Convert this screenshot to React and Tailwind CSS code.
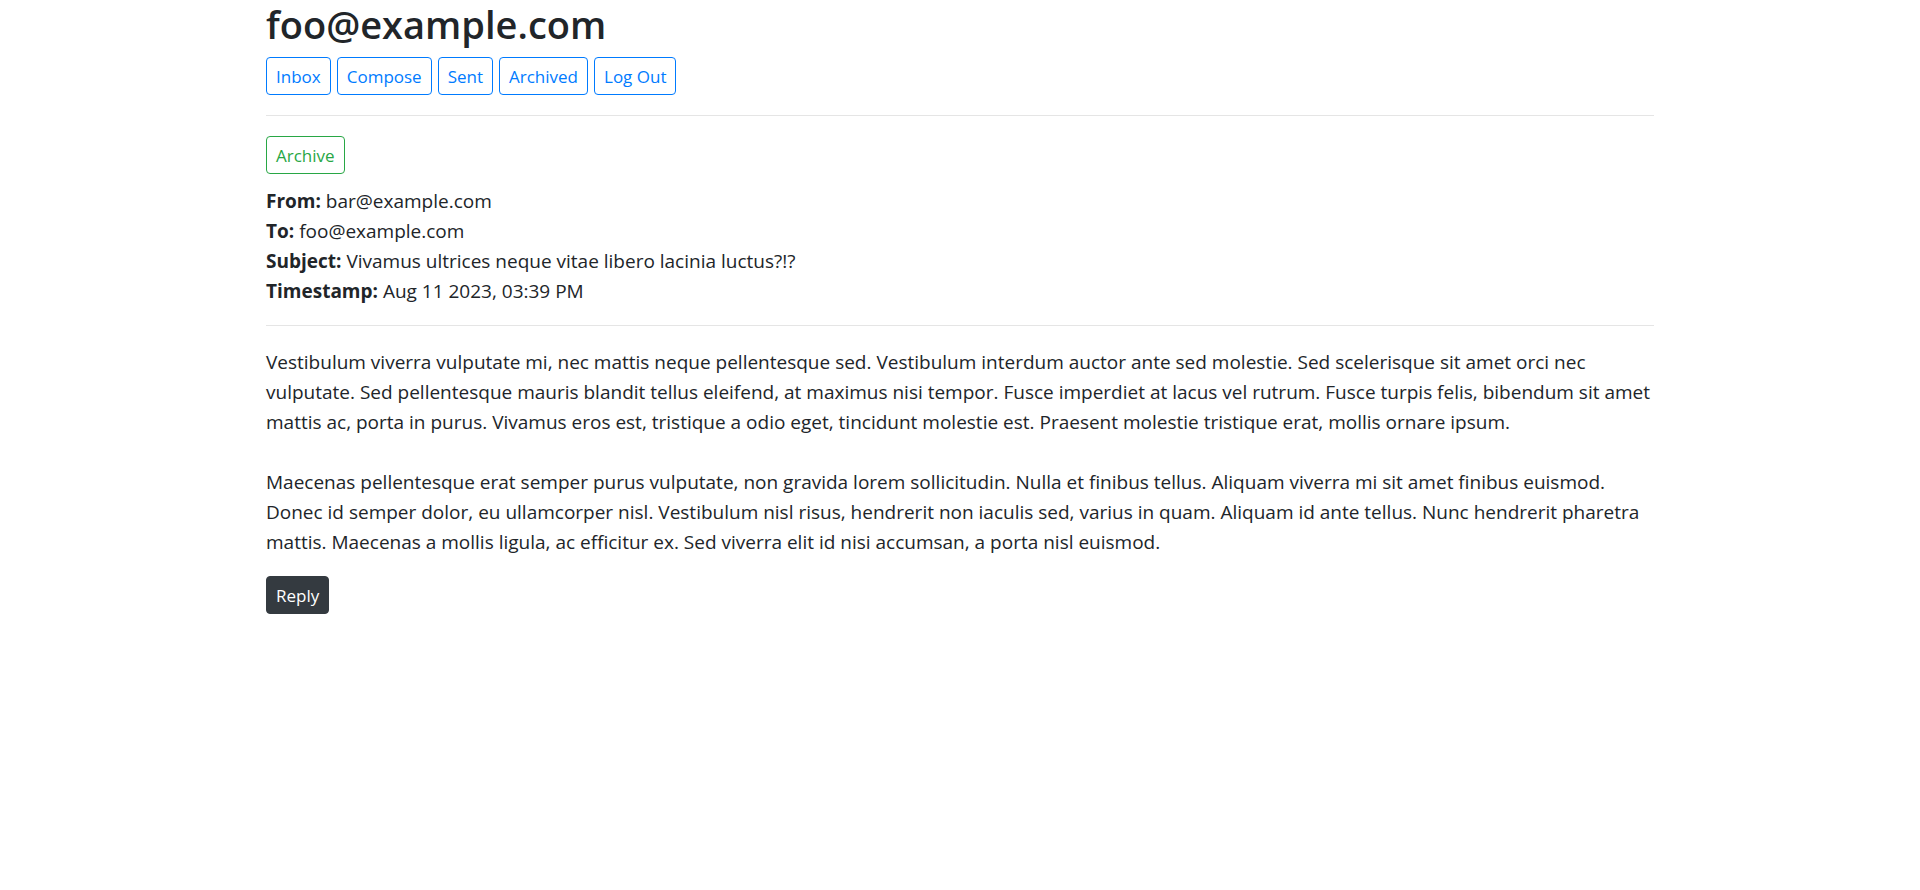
const navItems = ['Inbox', 'Compose', 'Sent', 'Archived', 'Log Out'];

const details = [
  ['From:', 'bar@example.com'],
  ['To:', 'foo@example.com'],
  ['Subject:', 'Vivamus ultrices neque vitae libero lacinia luctus?!?'],
  ['Timestamp:', 'Aug 11 2023, 03:39 PM'],
];

const paragraphs = [
  'Vestibulum viverra vulputate mi, nec mattis neque pellentesque sed. Vestibulum interdum auctor ante sed molestie. Sed scelerisque sit amet orci nec vulputate. Sed pellentesque mauris blandit tellus eleifend, at maximus nisi tempor. Fusce imperdiet at lacus vel rutrum. Fusce turpis felis, bibendum sit amet mattis ac, porta in purus. Vivamus eros est, tristique a odio eget, tincidunt molestie est. Praesent molestie tristique erat, mollis ornare ipsum.',
  'Maecenas pellentesque erat semper purus vulputate, non gravida lorem sollicitudin. Nulla et finibus tellus. Aliquam viverra mi sit amet finibus euismod. Donec id semper dolor, eu ullamcorper nisl. Vestibulum nisl risus, hendrerit non iaculis sed, varius in quam. Aliquam id ante tellus. Nunc hendrerit pharetra mattis. Maecenas a mollis ligula, ac efficitur ex. Sed viverra elit id nisi accumsan, a porta nisl euismod.',
];

const variants = {
  primary: 'border-[#007bff] text-[#007bff] hover:bg-[#007bff] hover:text-white',
  success: 'border-[#28a745] text-[#28a745] hover:bg-[#28a745] hover:text-white',
  dark: 'border-[#343a40] bg-[#343a40] text-white hover:bg-[#23272b]',
};

function Button({ variant, children }) {
  return (
    <button
      type="button"
      className={`cursor-pointer rounded-[4px] border px-[9px] pt-[6px] pb-1 text-[17px] leading-[26px] ${variants[variant]}`}
    >
      {children}
    </button>
  );
}

export default function App() {
  return (
    <div className="mx-auto max-w-[1424px] px-[18px] font-['Segoe_UI','Open_Sans',sans-serif] text-[19px] leading-[30px] text-[#212529]">
      <header className="border-b border-black/10 pb-5">
        <h2 className="mb-[9px] text-[38px] leading-[48px] font-semibold">foo@example.com</h2>
        <nav className="flex flex-wrap gap-[6px]">
          {navItems.map((item) => (
            <Button key={item} variant="primary">
              {item}
            </Button>
          ))}
        </nav>
      </header>

      <main className="pt-5">
        <section className="border-b border-black/10 pb-[19px]">
          <Button variant="success">Archive</Button>
          <div className="mt-3">
            {details.map(([label, value]) => (
              <p key={label}>
                <strong className="font-bold">{label}</strong> {value}
              </p>
            ))}
          </div>
        </section>

        <article className="space-y-[30px] pt-[21px] pb-[19px]">
          {paragraphs.map((text) => (
            <p key={text}>{text}</p>
          ))}
        </article>

        <Button variant="dark">Reply</Button>
      </main>
    </div>
  );
}
